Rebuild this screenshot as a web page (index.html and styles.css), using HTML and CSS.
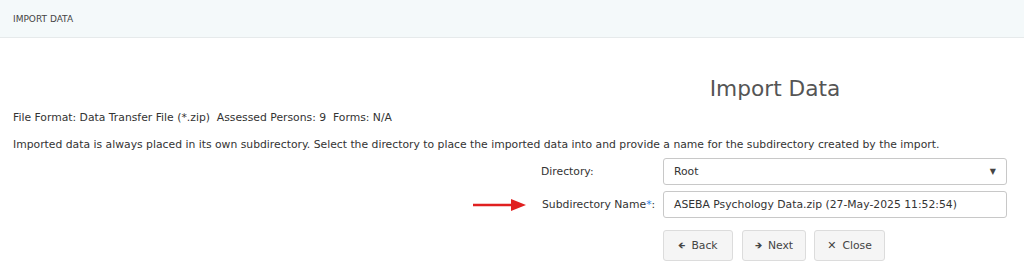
FILE: index.html
```html
<!DOCTYPE html>
<html>
<head>
<meta charset="utf-8">
<link rel="stylesheet" href="styles.css">
</head>
<body>
<div class="topbar"><span class="crumb">IMPORT DATA</span></div>
<main class="content">
  <div class="heading-row">
    <div class="spacer"></div>
    <h1 class="title">Import Data</h1>
  </div>
  <p class="info first">File Format: Data Transfer File (*.zip)&nbsp; Assessed Persons: 9&nbsp; Forms: N/A</p>
  <p class="info">Imported data is always placed in its own subdirectory. Select the directory to place the imported data into and provide a name for the subdirectory created by the import.</p>
  <div class="form">
    <div class="row">
      <div class="label">Directory:</div>
      <div class="field select"><span>Root</span><span class="caret">&#9660;</span></div>
    </div>
    <div class="row">
      <div class="label arrow-label">
        <svg class="arrow" width="54" height="14" viewBox="0 0 54 14"><path d="M0 7H40" stroke="#e02020" stroke-width="2.5"/><path d="M38 1L53 7L38 13Z" fill="#e02020"/></svg>
        <span>Subdirectory Name<span class="req">*</span>:</span>
      </div>
      <div class="field input">ASEBA Psychology Data.zip (27-May-2025 11:52:54)</div>
    </div>
    <div class="row">
      <div class="label"></div>
      <div class="buttons">
        <button class="btn back"><span class="ico">&#129144;</span>Back</button>
        <button class="btn next"><span class="ico">&#129146;</span>Next</button>
        <button class="btn close"><span class="ico x">&#10005;</span>Close</button>
      </div>
    </div>
  </div>
</main>
</body>
</html>
```
FILE: styles.css
```css
html, body { margin: 0; padding: 0; background: #fff; }
body { font-family: "DejaVu Sans", Verdana, sans-serif; font-size: 10.8px; color: #333; }
.topbar { height: 37px; background: #f4f9fa; border-bottom: 1px solid #e6eaeb; display: flex; align-items: center; padding-left: 13px; }
.crumb { font-size: 9px; color: #444; }
.content { padding: 0 13px; }
.heading-row { display: flex; padding-top: 37px; }
.spacer { flex: 0 0 526px; }
.title { flex: 1; margin: 0; font-weight: normal; font-size: 21.7px; color: #555; text-align: center; line-height: 28px; }
.info { margin: 0; line-height: 27px; }
.info.first { margin-top: 1px; }
.form { display: flex; flex-direction: column; gap: 6px; padding-top: 0; }
.row { display: flex; align-items: center; }
.label { flex: 0 0 650px; box-sizing: border-box; padding-left: 528px; display: flex; align-items: center; white-space: nowrap; }
.arrow-label { padding-left: 460px; }
.arrow { margin-right: 15px; }
.req { color: #2a7de1; }
.field { width: 344px; box-sizing: border-box; border: 1px solid #c8c8c8; border-radius: 3px; padding: 0 10px; height: 27px; display: flex; align-items: center; }
.select { justify-content: space-between; }
.caret { font-size: 8px; color: #444; }
.buttons { display: flex; gap: 8px; padding-top: 6px; }
.btn { font-family: inherit; font-size: 10.8px; color: #444; background: #f5f5f5; border: 1px solid #dcdcdc; border-radius: 3px; height: 31px; padding: 0; display: flex; align-items: center; justify-content: center; gap: 6px; }
.back { width: 70px; }
.next { width: 64px; margin-left: 1px; }
.close { width: 71px; }
.ico { font-size: 9px; }
.ico.x { font-size: 11px; font-weight: bold; }
```
